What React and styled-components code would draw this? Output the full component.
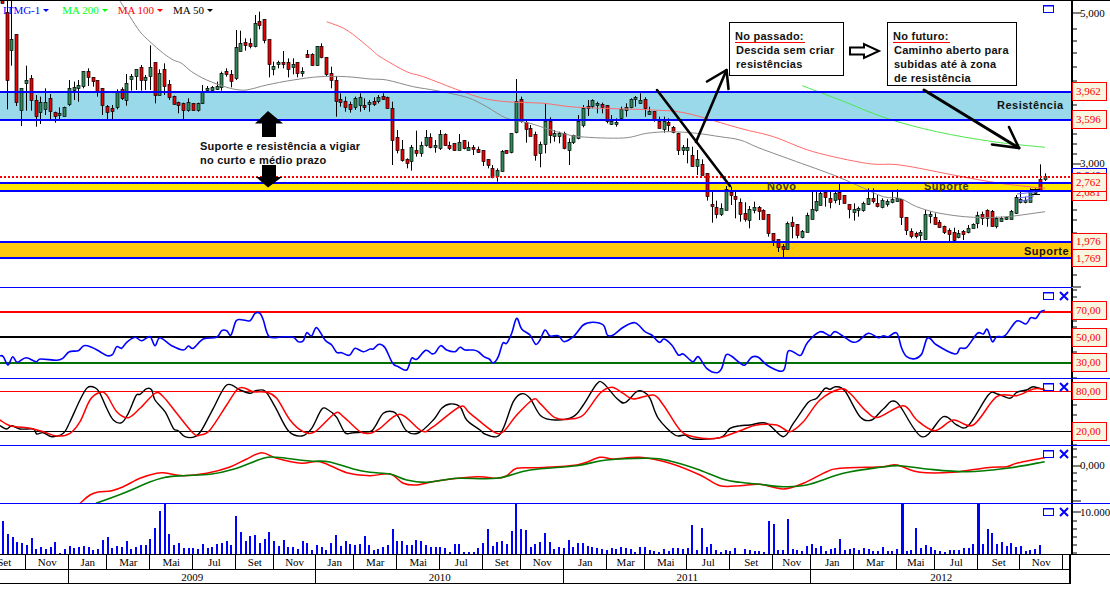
import React from 'react';
import styled, { createGlobalStyle } from 'styled-components';

const Global = createGlobalStyle`
  html, body { margin: 0; padding: 0; background: #fff; }
`;

/* ---------- data (read at 3x, converted on use) ---------- */
const candleSegs = [
  { dx: 0, rows: [
    [7,1,-6,9,-6,9],[22,1,37,242,0,328],[34,0,118,152,0,197],[49,1,103,307,103,318],[64,0,265,332,265,378],[79,0,240,248,197,332],[94,1,235,300,225,332],[107,1,300,347,285,380],[121,0,306,335,290,372],[136,0,306,328,265,345],[151,1,295,335,282,358],[164,1,335,347,335,368],[178,0,340,347,322,358],[193,0,320,347,320,347],[208,0,265,312,240,318],[221,0,262,270,245,300],[235,0,255,265,240,305],[250,0,214,258,214,265],[265,1,214,232,205,258],[278,1,232,245,232,260],[292,1,240,275,240,290],[307,1,265,317,265,345],[322,1,318,335,315,358],[335,1,325,335,315,358],[350,0,272,320,268,328],[365,1,268,295,262,300],[379,0,250,300,222,317],[392,0,228,236,222,272],[407,0,208,228,208,270],[422,1,202,240,195,272],[436,0,232,242,225,270],[450,0,202,228,136,270],[464,1,187,287,187,310],[478,0,220,285,208,285],[493,1,208,260,190,285],[507,1,252,290,240,300],[521,1,287,310,287,312],[535,1,305,315,305,340],[550,1,310,332,308,358],[564,0,305,328,295,335],[578,1,310,330,310,332],[593,0,310,332,308,335],[607,0,272,308,255,312],[622,0,265,272,258,272],[635,0,262,270,258,272],[650,0,258,266,245,270],[664,0,220,262,215,272],[679,1,213,221,205,230],[692,1,223,245,210,262],[707,0,142,236,90,240],[721,0,128,152,92,155],[736,1,126,135,115,152],[749,1,130,138,115,145],[764,0,70,140,45,142],[778,1,62,75,35,88],[793,1,58,122,58,130],[807,1,118,193,118,232],[820,0,198,206,185,226],[835,0,186,193,182,205],[850,1,186,193,153,205],[864,1,186,208,175,232],[878,0,192,200,175,223],[892,1,186,220,186,232],[906,0,213,220,202,230],[920,1,162,170,150,172],[935,1,162,195,160,198],[950,0,138,195,138,198],[964,1,138,172,130,175],[978,1,172,222,172,228],[992,1,220,242,200,265],[1007,1,240,302,228,350],[1021,1,297,305,280,320],[1035,1,302,320,290,335],[1049,1,312,328,305,338],[1064,0,295,322,290,330],[1079,0,290,315,280,335],[1092,1,315,320,295,330],[1106,0,305,310,300,335],
  ]},
  { dx: 370, rows: [
    [11,1,304,312,292,318],[25,0,290,303,285,310],[40,1,287,296,280,300],[52,1,292,325,290,325],[67,1,325,422,305,495],[82,1,412,452,390,460],[97,1,448,480,420,485],[110,1,478,490,475,505],[124,0,442,485,435,512],[139,1,450,458,392,470],[154,0,435,458,425,470],[167,0,412,435,390,440],[181,1,412,443,400,445],[196,0,436,443,420,458],[211,0,403,445,390,450],[224,1,403,437,400,437],[238,1,435,443,425,450],[253,1,430,452,430,452],[268,0,427,450,402,450],[281,1,420,445,420,448],[295,0,441,449,425,450],[310,1,442,449,435,465],[325,1,448,458,440,458],[338,1,451,485,451,498],[353,1,478,497,478,505],[367,1,503,530,495,535],[382,0,510,527,505,545],[395,0,453,513,450,515],[409,1,450,458,450,458],[424,0,400,456,400,460],[439,0,303,396,237,400],[452,1,298,365,290,368],[467,1,365,385,360,428],[481,1,383,406,375,408],[496,1,402,464,395,482],[511,0,433,460,425,502],[525,0,362,430,310,460],[539,1,362,403,352,430],[553,0,400,410,390,425],[568,0,400,408,395,430],[581,1,400,445,395,448],[596,0,427,450,415,495],[610,0,406,428,404,432],[625,0,362,412,345,418],[638,0,325,377,315,382],[653,1,318,325,300,348],[667,0,301,318,298,325],[682,0,308,315,305,340],[695,1,312,320,308,340],[710,1,316,365,315,370],[724,0,362,370,345,375],[739,0,367,369,355,380],[752,0,328,355,320,358],[767,0,320,330,310,350],[782,0,297,320,295,325],[796,0,290,296,288,320],[809,0,301,310,280,312],[824,1,298,325,292,350],[838,0,332,340,320,345],[853,1,334,358,334,365],[866,1,362,382,350,385],[881,0,362,385,350,398],[895,1,366,376,355,395],[910,1,380,395,378,400],[923,1,400,452,398,465],[938,0,442,450,435,465],[952,0,442,450,415,490],[967,1,466,500,440,500],[980,0,478,500,450,525],[995,1,492,525,478,525],[1010,1,520,588,520,602],
  ]},
  { dx: 690, rows: [
    [65,1,613,620,575,668],[79,1,622,642,602,655],[92,0,624,642,610,648],[107,0,568,630,558,630],[122,1,576,585,560,615],[136,1,588,597,575,655],[149,1,607,642,595,665],[164,1,640,657,607,665],[178,0,628,660,618,685],[193,0,622,630,605,640],[206,1,620,632,618,660],[220,1,630,657,628,658],[235,1,643,700,643,710],[250,1,700,720,700,738],[263,1,718,742,718,756],[278,1,738,746,732,772],[292,0,668,746,665,746],[307,1,666,677,650,715],[320,1,672,705,672,715],[335,0,693,710,690,715],[350,0,645,695,638,695],
  ]},
  { dx: 740, rows: [
    [215,0,628,658,575,658],[228,0,603,630,575,635],[241,0,580,615,575,615],[256,1,577,592,575,620],[270,1,593,605,575,625],[284,0,580,602,575,610],[298,1,577,597,550,615],[313,1,585,610,585,610],[328,1,613,628,613,655],[341,0,627,635,610,662],[355,0,623,630,620,650],[370,0,610,630,605,635],[385,0,593,610,565,615],[398,1,593,602,565,610],[412,1,608,617,585,622],[427,0,600,622,595,625],[441,0,602,610,598,620],[456,0,597,605,570,610],[470,0,595,605,568,605],[484,1,597,652,597,675],[498,1,652,692,652,705],[513,1,692,706,685,715],[527,1,698,708,695,715],[541,0,695,705,690,722],[556,0,643,718,630,718],[570,0,642,648,635,670],[584,1,650,672,640,672],[598,1,665,680,660,683],[612,1,677,695,677,702],[627,1,690,702,685,725],[641,1,695,720,683,725],[655,0,700,713,690,715],[670,1,693,702,690,720],[684,0,685,698,675,700],[699,0,672,683,670,685],[712,0,645,670,635,685],[726,1,643,655,635,675],[741,1,630,655,628,680],[755,1,632,677,630,680],[769,0,655,678,650,685],[784,0,655,663,650,665],[798,0,652,658,650,660],[812,0,632,655,630,658],[827,0,592,640,585,642],[841,0,598,607,575,610],[856,0,600,607,590,610],[870,0,575,605,565,605],[885,0,570,580,565,582],[899,1,537,570,493,575],[914,0,527,537,520,543],
  ]},
];

const lines = {
  ma50: [
    [0,0,[[358,0],[390,50],[420,95],[450,125],[490,160],[520,180],[545,190],[575,215],[620,240],[680,262],[720,270],[750,268],[800,255],[880,240],[960,230],[1040,230],[1110,237]]],
    [370,0,[[50,240],[130,260],[200,272],[290,292],[350,320],[410,355],[480,370],[560,395],[630,410],[760,414],[830,400],[900,395],[980,400],[1050,410],[1110,420]]],
    [740,0,[[60,445],[170,485],[280,525],[350,555],[430,590]]],
    [740,0,[[480,595],[530,620],[600,640],[700,652],[800,650],[915,635]]],
  ],
  ma100: [
    [0,0,[[980,65],[1040,90],[1110,145]]],
    [370,0,[[30,170],[110,215],[160,230],[270,272],[340,295],[410,305],[520,310],[600,320],[700,325],[850,330],[950,340],[1110,385]]],
    [740,0,[[100,410],[220,455],[380,490],[480,495],[640,525],[780,550],[915,565]]],
  ],
  ma200: [[740,0,[[187,257],[300,300],[440,355],[590,395],[760,425],[915,442]]]],
  rsi: [
    [0,285,[[0,212],[10,215],[24,240],[38,215],[52,232],[78,218],[108,230],[122,222],[170,226],[188,220],[208,200],[235,197],[252,182],[275,187],[300,200],[322,212],[338,208],[350,185],[365,190],[380,172],[405,157],[425,167],[450,155],[465,182],[480,158],[515,182],[550,195],[565,183],[580,190],[610,162],[650,157],[665,137],[680,137],[693,150],[708,108],[725,104],[750,107],[765,85],[780,85],[790,105],[808,155],[850,155],[880,157],[895,170],[910,167],[920,143],[935,153],[950,128],[975,165],[995,180],[1010,202],[1025,203],[1048,211],[1065,190],[1090,200]]],
    [370,285,[[0,192],[10,192],[27,178],[45,188],[68,235],[85,245],[110,255],[125,220],[140,223],[167,196],[185,206],[195,204],[212,182],[230,195],[255,200],[270,187],[285,195],[310,195],[325,200],[342,215],[358,222],[370,234],[385,215],[398,175],[410,175],[425,145],[440,100],[455,132],[480,150],[497,178],[510,165],[525,135],[540,153],[565,152],[582,170],[610,155],[640,120],[668,112],[700,120],[712,150],[730,150],[760,127],[795,113],[825,140],[845,150],[868,172],[882,162],[905,180],[925,210],[940,207],[968,230],[985,215],[1010,250],[1040,263],[1055,250],[1068,210],[1085,214]]],
    [740,285,[[0,234],[15,240],[35,217],[55,217],[85,243],[130,257],[145,198],[175,210],[185,208],[203,172],[240,140],[270,152],[287,140],[335,170],[355,168],[385,145],[415,158],[430,152],[445,155],[470,144],[485,190],[500,215],[525,221],[545,207],[560,162],[572,162],[590,180],[645,207],[660,190],[680,187],[712,145],[730,147],[742,133],[757,170],[770,155],[795,152],[830,108],[858,117],[872,98],[888,100],[902,80],[914,76]]],
  ],
  stochK: [
    [0,285,[[0,422],[20,432],[35,422],[60,432],[100,432],[110,447],[130,443],[155,455],[190,445],[210,410],[240,345],[262,308],[285,308],[300,325],[320,370],[340,405],[365,413],[385,385],[408,332],[420,328],[440,311],[455,315],[465,345],[495,380],[520,430],[535,437],[555,455],[585,455],[605,435],[640,370],[680,300],[720,315],[750,325],[765,318],[795,318],[825,365],[865,437],[905,453],[935,430],[965,373],[985,375],[1010,397],[1035,443],[1060,443],[1110,440]]],
    [370,285,[[15,425],[40,385],[70,380],[85,395],[110,438],[145,444],[190,405],[215,370],[240,357],[270,365],[290,405],[330,435],[345,447],[380,455],[400,430],[430,350],[455,326],[480,340],[512,392],[555,405],[610,395],[640,360],[680,297],[700,295],[740,340],[765,353],[800,320],[820,320],[840,340],[865,400],[915,450],[945,450],[970,462],[1050,458],[1080,430],[1110,422]]],
    [740,285,[[30,420],[80,415],[130,455],[160,415],[205,352],[230,340],[255,310],[270,313],[288,305],[315,318],[360,395],[395,405],[430,372],[470,352],[545,455],[610,395],[650,420],[685,422],[745,330],[770,326],[810,340],[830,322],[860,315],[880,305],[914,315]]],
  ],
  stochD: [
    [0,285,[[0,405],[30,422],[90,430],[130,440],[170,453],[210,445],[240,410],[270,345],[300,322],[320,330],[350,380],[385,398],[420,370],[465,325],[490,335],[530,385],[580,445],[600,450],[630,435],[680,360],[710,315],[730,308],[760,320],[800,322],[830,340],[870,405],[910,440],[945,440],[1005,385],[1030,395],[1080,440],[1110,445]]],
    [370,285,[[30,430],[90,388],[155,438],[190,425],[270,365],[300,385],[370,440],[400,440],[440,390],[490,343],[510,355],[555,398],[600,402],[640,390],[690,325],[725,307],[760,325],[790,342],[850,330],[880,360],[930,435],[970,455],[1040,460],[1110,437]]],
    [740,285,[[50,420],[110,420],[150,440],[190,410],[240,345],[300,312],[330,325],[380,380],[415,397],[490,362],[530,405],[585,437],[640,405],[700,420],[770,335],[830,332],[880,312],[914,313]]],
  ],
  macdFast: [
    [0,445,[[240,175],[270,150],[295,141],[335,137],[370,125],[420,100],[470,85],[495,84],[550,92],[620,85],[690,66],[740,42],[785,23],[830,40],[905,55],[960,50],[1040,83],[1110,92]]],
    [370,445,[[60,87],[100,115],[140,120],[200,108],[320,95],[380,100],[410,92],[440,70],[500,68],[620,60],[690,37],[730,42],[810,37],[900,55],[990,90],[1050,122],[1110,122]]],
    [740,445,[[60,118],[130,132],[190,115],[260,80],[300,70],[430,65],[470,60],[540,82],[640,82],[740,68],[800,65],[830,55],[914,38]]],
  ],
  macdSlow: [
    [0,445,[[288,175],[370,145],[440,115],[490,98],[550,92],[630,88],[700,73],[790,40],[830,37],[930,48],[985,50],[1060,72],[1110,82]]],
    [370,445,[[60,87],[110,105],[170,112],[260,100],[380,100],[480,75],[620,62],[710,45],[840,40],[900,48],[980,72],[1060,103],[1110,112]]],
    [740,445,[[60,118],[130,125],[200,120],[310,85],[420,67],[480,62],[560,72],[680,80],[800,70],[914,50]]],
  ],
};

const volumeSegs = [
  [3, [228,267,276,291,294,300,279,312,306,312,306,291,324,312,303,309,306,303,306,315,312,285,276,309,303,306,288,312,306,300,300,282,249,198,175,267,300,294,309,309,309,312,297,309,306,297,294,288,300,213,261,288,273,270,294,282,261,288,303,285,306,306,312,288,294,315,300,306,315,294,270,303,288,297,300,297,273,300]],
  [373.67, [315,312,306,300,252,288,288,300,300,285,288,300,306,306,306,309,321,297,297,321,321,321,309,294,252,303,291,288,297,258,175,252,255,306,297,291,264,291,312,306,309,285,306,294,294,303,306,309,312,315,309,312,306,309,312,321,306,306,315,318,321,312,318,309,309,312,309,240,315,249,306,297,315,321,315,318,309]],
  [745, [312,315,318,318,321,228,237,315,315,222,312,315,318,303,297,309,303,318,312,309,282,315,312,309,315,309,312,318,318,306,318,318,312,175,318,315,249,309,300,306,315,318,321,315,315,315,309,309,297,175,297,252,264,297,291,303,294,306,303,318,315,312,300]],
];

const months = [
  ['Set',26.3],['Nov',43],['Jan',38],['Mar',43],['Mai',43],['Jul',43],['Set',38],['Nov',41.7],
  ['Jan',38.3],['Mar',43],['Mai',43],['Jul',43],['Set',38],['Nov',43],['Jan',43],['Mar',38],
  ['Mai',42],['Jul',43],['Set',43],['Nov',38],['Jan',43],['Mar',43],['Mai',38],['Jul',43],['Set',42],['Nov',43],['',8],
];
const years = [['',69.3],['2009',246.7],['2010',248.3],['2011',247],['2012',260]];

const toPoints = ([dx, dy, pts]) => pts.map(([x, y]) => [dx + x / 3, dy + y / 3]);
/* Catmull-Rom through the sampled points, so the indicators read as curves */
const smoothPath = (segs) => {
  const p = segs.flatMap(toPoints);
  let d = `M${p[0][0].toFixed(1)} ${p[0][1].toFixed(1)}`;
  for (let i = 0; i < p.length - 1; i++) {
    const a = p[Math.max(0, i - 1)];
    const b = p[i];
    const c = p[i + 1];
    const e = p[Math.min(p.length - 1, i + 2)];
    const c1 = [b[0] + (c[0] - a[0]) / 6, b[1] + (c[1] - a[1]) / 6];
    const c2 = [c[0] - (e[0] - b[0]) / 6, c[1] - (e[1] - b[1]) / 6];
    d += `C${c1[0].toFixed(1)} ${c1[1].toFixed(1)} ${c2[0].toFixed(1)} ${c2[1].toFixed(1)} ${c[0].toFixed(1)} ${c[1].toFixed(1)}`;
  }
  return d;
};

/* ---------- styled parts ---------- */
const Root = styled.div`
  width: 1110px;
  height: 595px;
  background: #fff;
  overflow: hidden;
  border-top: 1px solid #000;
  box-sizing: border-box;
`;
const Pane = styled.section`
  display: flex;
  height: ${(p) => p.$h}px;
`;
const Plot = styled.div`
  position: relative;
  width: 1071px;
  flex: none;
  box-sizing: border-box;
  border-bottom: 1px solid ${(p) => p.$rule};
  svg { display: block; }
`;
const Scale = styled.div`
  position: relative;
  flex: 1;
  box-sizing: border-box;
  border-left: 2px solid #000;
  border-bottom: 1px solid ${(p) => p.$rule || 'transparent'};
  font: 11px "Liberation Serif", serif;
  svg { position: absolute; left: 0; top: 0; display: block; }
`;
const ScaleValue = styled.span`
  position: absolute;
  left: 7px;
  top: ${(p) => p.$y - 7}px;
  line-height: 14px;
  color: #000;
  white-space: nowrap;
`;
const PriceTag = styled.span`
  position: absolute;
  left: -1px;
  top: ${(p) => p.$y}px;
  width: 35px;
  height: ${(p) => p.$h}px;
  box-sizing: border-box;
  border: 1px solid ${(p) => p.$tone || '#f00'};
  background: #f8f6e0;
  color: ${(p) => p.$tone || '#f00'};
  padding-left: 3px;
  line-height: ${(p) => p.$h - 2}px;
`;
const Legend = styled.div`
  position: absolute;
  left: 1px;
  top: 2px;
  font: 11px/14px "Liberation Serif", serif;
  display: flex;
  white-space: nowrap;
`;
const LegendItem = styled.span`
  color: ${(p) => p.$color};
  margin-left: ${(p) => p.$gap}px;
  display: inline-flex;
  align-items: center;
  gap: 3px;
  &::after {
    content: '';
    border-left: 3px solid transparent;
    border-right: 3px solid transparent;
    border-top: 3px solid ${(p) => p.$color};
    margin-top: 1px;
  }
`;
const Note = styled.div`
  position: absolute;
  left: ${(p) => p.$x}px;
  top: ${(p) => p.$y}px;
  font: bold 11px/14px "Liberation Sans", sans-serif;
  letter-spacing: 0.25px;
  color: #111;
  white-space: nowrap;
`;
const NoteBox = styled(Note)`
  width: ${(p) => p.$w}px;
  height: ${(p) => p.$h}px;
  box-sizing: border-box;
  border: 1px solid #000;
  background: #fff;
  padding: 6px 0 0 6px;
`;
const NoteTitle = styled.span`
  border-bottom: 1px solid #f00;
  padding-right: 1px;
  margin-left: -1px;
  display: inline-block;
  line-height: 12px;
`;
const BandLabel = styled(Note)`
  color: ${(p) => p.$color || '#111'};
  letter-spacing: 0.5px;
`;
const Row = styled.div`
  display: flex;
  width: 1071px;
  height: ${(p) => p.$h}px;
  box-sizing: border-box;
  border-bottom: 1px solid #000;
  border-right: 2px solid #000;
  font: 11px "Liberation Serif", serif;
  color: #000;
`;
const Cell = styled.div`
  flex: none;
  width: ${(p) => p.$w}px;
  box-sizing: border-box;
  border-right: 1px solid #000;
  overflow: hidden;
  display: flex;
  align-items: center;
  justify-content: ${(p) => (p.$edge ? 'flex-end' : 'center')};
  padding-right: ${(p) => (p.$edge ? 14 : 0)}px;
  &:last-child { border-right: 0; }
`;

/* ---------- drawing helpers ---------- */
const PaneSvg = ({ top, h, children }) => (
  <svg width="1071" height={h} viewBox={`0 ${top} 1071 ${h}`}>{children}</svg>
);
const Trace = ({ segs, color, width = 1 }) => (
  <path d={smoothPath(segs)} fill="none" stroke={color} strokeWidth={width} strokeLinejoin="round" />
);
const Level = ({ y, color, width = 1 }) => (
  <line x1="0" x2="1071" y1={y} y2={y} stroke={color} strokeWidth={width} />
);
const Controls = ({ y, closeable = true }) => (
  <g stroke="#00f" fill="none">
    <rect x="1043.5" y={y + 0.5} width="10" height="7" strokeWidth="1" />
    <line x1="1043" x2="1054" y1={y + 1} y2={y + 1} strokeWidth="1" />
    {closeable && (
      <path d={`M1060 ${y}L1068 ${y + 8}M1068 ${y}L1060 ${y + 8}`} strokeWidth="2" />
    )}
  </g>
);
const Ticks = ({ items, h }) => (
  <svg width="38" height={h}>
    {items.map(([y, len], i) => (
      <line key={i} x1="0" x2={len} y1={y} y2={y} stroke="#000" strokeWidth="1" />
    ))}
  </svg>
);

const Candles = () => (
  <g>
    {candleSegs.flatMap((seg, s) =>
      seg.rows.map(([x, red, bt, bb, wt, wb], i) => {
        const cx = Math.round(seg.dx + x / 3) + 0.5;
        return (
          <g key={`${s}-${i}`}>
            <line x1={cx} x2={cx} y1={wt / 3} y2={wb / 3} stroke="#000" strokeWidth="1" />
            <rect
              x={cx - 1.5}
              y={Math.round(bt / 3) + 0.5}
              width="3"
              height={Math.max(2, Math.round((bb - bt) / 3))}
              fill={red ? '#e60000' : '#2e8b57'}
              stroke="#000"
              strokeWidth="0.7"
            />
          </g>
        );
      })
    )}
  </g>
);

const Overlay = () => (
  <g>
    {/* block arrows */}
    <polygon points="268,111 283,123.5 276,123.5 276,137 262,137 262,123.5 255,123.5" fill="#000" />
    <polygon points="262,165 276,165 276,177 282,177 268,187.5 256,177 262,177" fill="#000" />
    {/* hand drawn arrows */}
    <g stroke="#000" strokeWidth="2.6" fill="none" strokeLinecap="round" strokeLinejoin="round">
      <line x1="657" y1="90" x2="730" y2="186" />
      <polyline points="696,142 726.5,70" />
      <polyline points="707,81.5 726.5,70 728.5,89" />
      <line x1="924" y1="90" x2="1019" y2="148" strokeWidth="3" />
      <polyline points="1009,127 1019,148 992,144.5" />
    </g>
    <polygon
      points="850,47.5 864,47.5 864,44 879,51 864,58 864,54.5 850,54.5"
      fill="#fff"
      stroke="#000"
      strokeWidth="2"
    />
    {/* stray trendline ticks near last candles */}
    <g stroke="#6a6aff" strokeWidth="1" fill="none">
      <path d="M1017 194L1035 192M1018 198L1034 196M1020 201L1032 199" />
    </g>
    <g stroke="#000" strokeWidth="1" fill="none">
      <path d="M1030 189.500L1040 189.500M1032 194.500L1040 194.500" />
    </g>
  </g>
);

const mainTicks = [[12,8],[28,4],[40,4],[52,4],[66,4],[80,4],[91,4],[104,4],[119,4],[133,4],[143,4],[153,4],[163,8],[177,4],[191,4],[209,4],[219,4],[232,4],[244,4],[257,4],[274,4],[286,8]];
const rsiTicks = [[2,4],[9,4],[17,4],[25,4],[33,4],[39,4],[48,4],[56,4],[64,4],[72,4],[80,4],[90,4]];
const stochTicks = [[12,4],[19,4],[26,4],[36,4],[44,4],[58,4],[66,4]];
const macdTicks = [[3,4],[11,4],[20,8],[27,4],[35,4],[44,4],[55,8]];
const volTicks = [[8,8],[17,4],[25,4],[33,4],[41,4],[49,4]];

export default function App() {
  return (
    <>
      <Global />
      <Root>
        <Pane $h={287}>
          <Plot $rule="#00f">
            <PaneSvg top={1} h={286}>
              <rect x="0" y="92" width="1071" height="28" fill="#99d9ea" />
              <rect x="0" y="183" width="1071" height="8" fill="#ffe600" />
              <rect x="0" y="242" width="1071" height="16" fill="#ffc90e" />
              <Candles />
              <Trace segs={lines.ma50} color="#8a8a8a" />
              <Trace segs={lines.ma100} color="#ff6a6a" />
              <Trace segs={lines.ma200} color="#4de84d" />
              <Level y={92} color="#00f" width={2} />
              <Level y={120} color="#00f" width={2} />
              <Level y={183} color="#00f" width={2} />
              <Level y={191} color="#00f" width={2} />
              <Level y={242} color="#00f" width={2} />
              <Level y={258} color="#00f" width={2} />
              <line x1="0" x2="1071" y1="177" y2="177" stroke="#f00" strokeWidth="2" strokeDasharray="2 2" />
              <Overlay />
              <Controls y={5} closeable={false} />
            </PaneSvg>
            <Legend>
              <LegendItem $color="#00f" $gap={2}>ITMG-1</LegendItem>
              <LegendItem $color="#0f0" $gap={13}>MA 200</LegendItem>
              <LegendItem $color="#f00" $gap={10}>MA 100</LegendItem>
              <LegendItem $color="#000" $gap={10}>MA 50</LegendItem>
            </Legend>
            <Note $x={200} $y={138}>Suporte e resistência a vigiar<br />no curto e médio prazo</Note>
            <NoteBox $x={729} $y={21} $w={115} $h={54}>
              <NoteTitle>No passado:</NoteTitle><br />Descida sem criar<br />resistências
            </NoteBox>
            <NoteBox $x={887} $y={21} $w={130} $h={64}>
              <NoteTitle>No futuro:</NoteTitle><br />Caminho aberto para<br />subidas até à zona<br />de resistência
            </NoteBox>
            <BandLabel $x={997} $y={97}>Resistência</BandLabel>
            <BandLabel $x={767} $y={178} $color="#3a3a00">Novo</BandLabel>
            <BandLabel $x={924} $y={178} $color="#3a3a00">Suporte</BandLabel>
            <BandLabel $x={1024} $y={243}>Suporte</BandLabel>
          </Plot>
          <Scale>
            <Ticks items={mainTicks} h={287} />
            <ScaleValue $y={12}>5,000</ScaleValue>
            <ScaleValue $y={162}>3,000</ScaleValue>
            <PriceTag $y={81} $h={19}>3,962</PriceTag>
            <PriceTag $y={109} $h={19}>3,596</PriceTag>
            <PriceTag $y={167} $h={14} $tone="#00f">2,848</PriceTag>
            <PriceTag $y={183} $h={17}>2,681</PriceTag>
            <PriceTag $y={172} $h={19}>2,762</PriceTag>
            <PriceTag $y={232} $h={17}>1,976</PriceTag>
            <PriceTag $y={248} $h={18}>1,769</PriceTag>
          </Scale>
        </Pane>

        <Pane $h={91}>
          <Plot $rule="#00f">
            <PaneSvg top={288} h={90}>
              <Level y={312} color="#f00" width={2} />
              <Level y={337} color="#000" width={2} />
              <Level y={363} color="#007000" width={2} />
              <Trace segs={lines.rsi} color="#00f" width={1.6} />
              <Controls y={292} />
            </PaneSvg>
          </Plot>
          <Scale $rule="#00f">
            <Ticks items={rsiTicks} h={90} />
            <PriceTag $y={13} $h={19}>70,00</PriceTag>
            <PriceTag $y={40} $h={19}>50,00</PriceTag>
            <PriceTag $y={65} $h={19}>30,00</PriceTag>
          </Scale>
        </Pane>

        <Pane $h={67}>
          <Plot $rule="#00f">
            <PaneSvg top={379} h={66}>
              <Level y={391.5} color="#f00" />
              <Level y={431.5} color="#000" />
              <Trace segs={lines.stochK} color="#000" width={1.4} />
              <Trace segs={lines.stochD} color="#f00" width={1.5} />
              <Controls y={383} />
            </PaneSvg>
          </Plot>
          <Scale $rule="#00f">
            <Ticks items={stochTicks} h={66} />
            <PriceTag $y={3} $h={18}>80,00</PriceTag>
            <PriceTag $y={43} $h={19}>20,00</PriceTag>
          </Scale>
        </Pane>

        <Pane $h={58}>
          <Plot $rule="#00f">
            <PaneSvg top={446} h={57}>
              <Trace segs={lines.macdFast} color="#f00" width={1.5} />
              <Trace segs={lines.macdSlow} color="#007a00" width={1.6} />
              <Controls y={450} />
            </PaneSvg>
          </Plot>
          <Scale $rule="#00f">
            <Ticks items={macdTicks} h={57} />
            <ScaleValue $y={19}>0,000</ScaleValue>
          </Scale>
        </Pane>

        <Pane $h={51}>
          <Plot $rule="#000">
            <PaneSvg top={504} h={50}>
              {volumeSegs.flatMap(([x0, tops], s) =>
                tops.map((t, i) => {
                  const x = Math.round(x0 + i * 4.757);
                  const y = 445 + t / 3;
                  return (
                    <rect key={`${s}-${i}`} x={x - 1} y={y} width={t === 175 && s === 2 ? 3 : 2} height={554 - y} fill="#00f" />
                  );
                })
              )}
              <Controls y={508} />
            </PaneSvg>
          </Plot>
          <Scale $rule="#000">
            <Ticks items={volTicks} h={50} />
            <ScaleValue $y={8}>10.000.000</ScaleValue>
          </Scale>
        </Pane>

        <Row $h={15}>
          {months.map(([label, w], i) => (
            <Cell key={i} $w={w} $edge={i === 0}>{label}</Cell>
          ))}
        </Row>
        <Row $h={14}>
          {years.map(([label, w], i) => (
            <Cell key={i} $w={w}>{label}</Cell>
          ))}
        </Row>
      </Root>
    </>
  );
}
